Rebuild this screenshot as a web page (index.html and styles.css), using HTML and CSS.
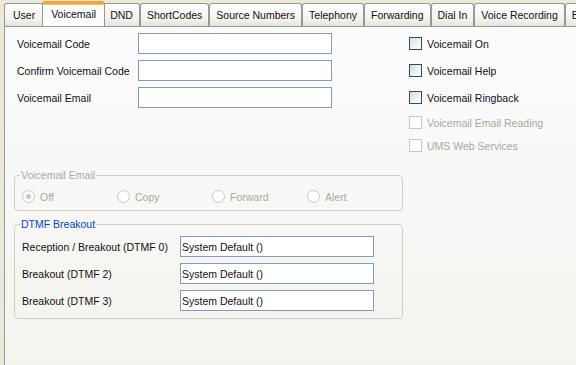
FILE: index.html
```html
<!DOCTYPE html>
<html lang="en">
<head>
    <meta charset="UTF-8">
    <title>User - Voicemail</title>
    <link rel="stylesheet" href="styles.css">
</head>
<body>
    <div class="tabs">
        <div class="tab first">User</div>
        <div class="tab active">Voicemail</div>
        <div class="tab">DND</div>
        <div class="tab">ShortCodes</div>
        <div class="tab">Source Numbers</div>
        <div class="tab">Telephony</div>
        <div class="tab">Forwarding</div>
        <div class="tab">Dial In</div>
        <div class="tab">Voice Recording</div>
        <div class="tab">Button Programming</div>
    </div>
    <div class="panel">
        <div class="top-area">
            <div class="fields">
                <div class="field-row">
                    <label>Voicemail Code</label>
                    <input type="text" class="text-box">
                </div>
                <div class="field-row">
                    <label>Confirm Voicemail Code</label>
                    <input type="text" class="text-box">
                </div>
                <div class="field-row">
                    <label>Voicemail Email</label>
                    <input type="text" class="text-box">
                </div>
            </div>
            <div class="checks">
                <div class="check-row"><span class="check"></span>Voicemail On</div>
                <div class="check-row"><span class="check"></span>Voicemail Help</div>
                <div class="check-row"><span class="check"></span>Voicemail Ringback</div>
                <div class="check-row short disabled"><span class="check"></span>Voicemail Email Reading</div>
                <div class="check-row short disabled"><span class="check"></span>UMS Web Services</div>
            </div>
        </div>

        <fieldset class="group email-group">
            <legend class="legend-disabled">Voicemail Email</legend>
            <div class="radios">
                <div class="radio-item"><span class="radio checked"></span>Off</div>
                <div class="radio-item"><span class="radio"></span>Copy</div>
                <div class="radio-item"><span class="radio"></span>Forward</div>
                <div class="radio-item"><span class="radio"></span>Alert</div>
            </div>
        </fieldset>

        <fieldset class="group dtmf-group">
            <legend>DTMF Breakout</legend>
            <div class="dtmf-row">
                <label>Reception / Breakout (DTMF 0)</label>
                <input type="text" class="text-box dtmf-box" value="System Default ()">
            </div>
            <div class="dtmf-row">
                <label>Breakout (DTMF 2)</label>
                <input type="text" class="text-box dtmf-box" value="System Default ()">
            </div>
            <div class="dtmf-row">
                <label>Breakout (DTMF 3)</label>
                <input type="text" class="text-box dtmf-box" value="System Default ()">
            </div>
        </fieldset>
    </div>
</body>
</html>
```
FILE: styles.css
```css
* {
    margin: 0;
    padding: 0;
    box-sizing: border-box;
    font-family: "Liberation Sans", Arial, sans-serif;
}

body {
    background: #ece9d8;
    width: 576px;
    height: 365px;
    overflow: hidden;
    font-size: 10.5px;
    color: #111;
}

/* tab strip */
.tabs {
    display: flex;
    align-items: flex-end;
    height: 26px;
    padding-left: 4px;
    white-space: nowrap;
    overflow: hidden;
}

.tab {
    flex: none;
    height: 23px;
    padding: 0 6px;
    line-height: 22px;
    border: 1px solid #919b9c;
    border-bottom: none;
    border-radius: 3px 3px 0 0;
    background: linear-gradient(#fefefe, #f4f3ee 70%, #e4e2d8);
}

.tab.first {
    padding: 0 8px;
}

.tab.active {
    position: relative;
    z-index: 2;
    height: 26px;
    margin: 0 -2px -1px;
    padding: 0 8px;
    line-height: 21px;
    border-top: 3px solid #f1a43f;
    background: #fcfcfe;
    box-shadow: inset 0 1px 0 #ffc73c;
}

/* page panel */
.panel {
    position: relative;
    z-index: 1;
    width: 590px;
    height: 345px;
    margin-left: 4px;
    border: 1px solid #919b9c;
    background: linear-gradient(#fcfcfe, #f4f3ee);
    padding: 3px 0 0 9px;
}

.top-area {
    display: flex;
    height: 137px;
}

.fields {
    width: 395px;
    padding-left: 3px;
}

.field-row {
    display: flex;
    align-items: center;
    height: 27px;
}

.field-row label {
    width: 121px;
}

.text-box {
    width: 194px;
    height: 21px;
    border: 1px solid #7f9db9;
    background: #fff;
    font-size: 10.5px;
    color: #111;
    padding: 0 3px;
    outline: none;
}

.check-row {
    display: flex;
    align-items: center;
    height: 27px;
}

.check-row.short {
    height: 23px;
}

.check {
    width: 13px;
    height: 13px;
    margin-right: 5px;
    border: 1px solid #1c5180;
    background: linear-gradient(135deg, #dcdcd5, #fafaf8 80%);
}

.check-row.disabled {
    color: #aca899;
}

.check-row.disabled .check {
    border-color: #cac8bb;
    background: #fff;
}

/* group boxes */
.group {
    width: 389px;
    min-width: 0;
    border: 1px solid #d0d0bf;
    border-radius: 4px;
    padding: 0 7px;
}

.group legend {
    color: #0046d5;
    padding: 0 1px;
    margin-left: -2px;
}

.group legend.legend-disabled {
    color: #aca899;
}

.email-group {
    margin-top: 2px;
    height: 42px;
}

.radios {
    display: flex;
    padding-top: 9px;
}

.radio-item {
    display: flex;
    align-items: center;
    width: 95px;
    color: #aca899;
}

.radio-item:last-child {
    width: auto;
}

.radio {
    width: 13px;
    height: 13px;
    margin-right: 5px;
    border: 1px solid #cac8bb;
    border-radius: 50%;
    background: #fff;
    display: flex;
    align-items: center;
    justify-content: center;
}

.radio.checked::after {
    content: "";
    width: 5px;
    height: 5px;
    border-radius: 50%;
    background: #cac8bb;
}

.dtmf-group {
    margin-top: 7px;
    height: 101px;
    padding-top: 3px;
}

.dtmf-row {
    display: flex;
    align-items: center;
    height: 27px;
}

.dtmf-row label {
    width: 158px;
}

.dtmf-box {
    width: 194px;
    height: 21px;
    padding: 0 1px;
}
```
